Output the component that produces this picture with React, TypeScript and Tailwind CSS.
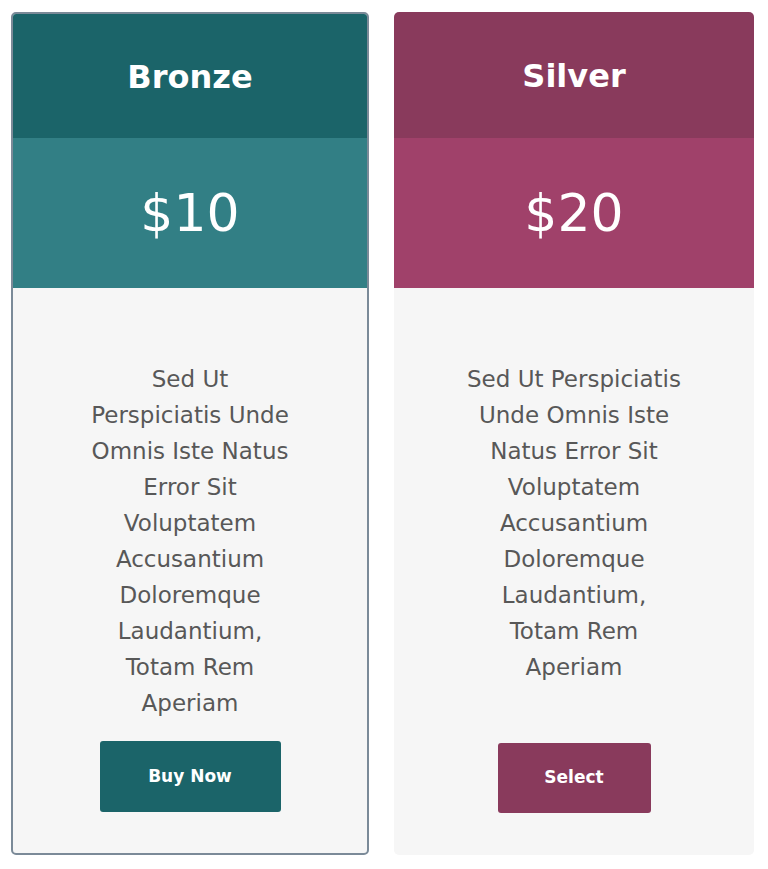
import React from "react";

const bodyText = "Sed Ut Perspiciatis Unde Omnis Iste Natus Error Sit Voluptatem Accusantium Doloremque Laudantium, Totam Rem Aperiam";

export default function App() {
  return (
    <div
      className="min-h-[869px] bg-white pl-[11px] pt-[12px] flex items-stretch gap-[25px]"
      style={{ fontFamily: '"DejaVu Sans", Verdana, sans-serif' }}
    >
      {/* Bronze */}
      <div className="w-[358px] h-[843px] flex flex-col rounded-[5px] border-2 border-[#7b8a98] overflow-hidden bg-[#f6f6f6]">
        <div className="h-[124px] shrink-0 bg-[#1b6469] flex items-center justify-center pt-[1px]">
          <h2 className="text-[32px] leading-none font-bold text-white">Bronze</h2>
        </div>
        <div className="h-[150px] shrink-0 bg-[#327f85] flex items-center justify-center">
          <span className="text-[52px] leading-none text-white">$10</span>
        </div>
        <div className="flex-1 flex flex-col items-center pt-[73px] pb-[41px]">
          <p className="w-[206px] text-center text-[23px] leading-[36px] text-[#585858]">{bodyText}</p>
          <button className="mt-auto w-[181px] h-[71px] rounded-[3px] bg-[#1b6469] text-white text-[17px] font-bold">
            Buy Now
          </button>
        </div>
      </div>

      {/* Silver */}
      <div className="w-[360px] h-[843px] flex flex-col rounded-[5px] overflow-hidden bg-[#f6f6f6]">
        <div className="h-[126px] shrink-0 bg-[#893a5c] flex items-center justify-center pt-[1px]">
          <h2 className="text-[32px] leading-none font-bold text-white">Silver</h2>
        </div>
        <div className="h-[150px] shrink-0 bg-[#a0416a] flex items-center justify-center">
          <span className="text-[52px] leading-none text-white">$20</span>
        </div>
        <div className="flex-1 flex flex-col items-center pt-[73px] pb-[42px]">
          <p className="w-[216px] text-center text-[23px] leading-[36px] text-[#585858]">{bodyText}</p>
          <button className="mt-auto w-[153px] h-[70px] rounded-[3px] bg-[#893a5c] text-white text-[17px] font-bold">
            Select
          </button>
        </div>
      </div>
    </div>
  );
}
